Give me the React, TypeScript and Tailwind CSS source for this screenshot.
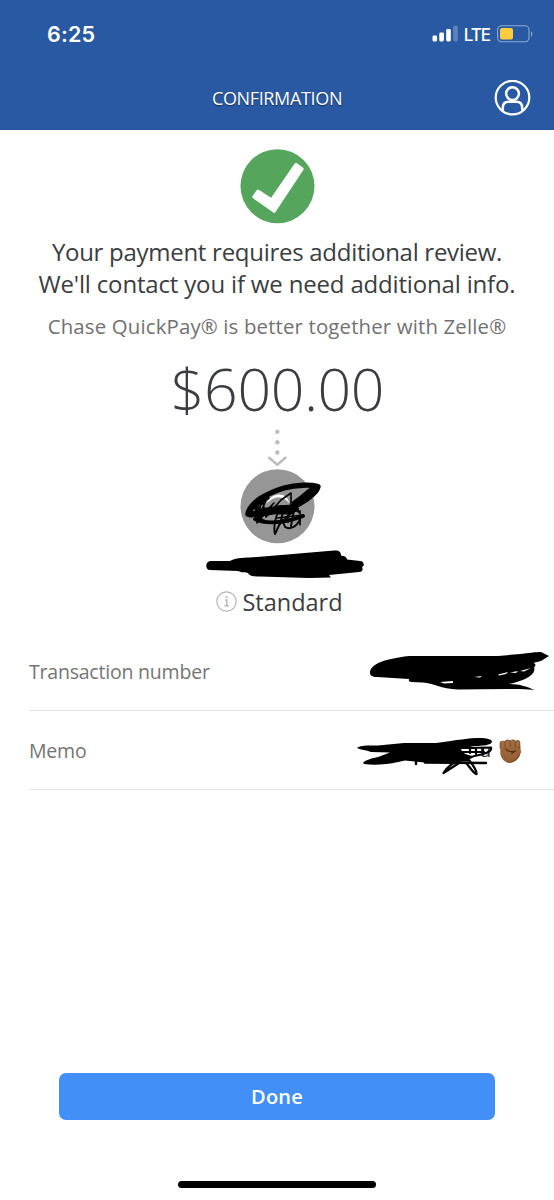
function SignalIcon() {
  return (
    <svg width="27" height="18" viewBox="0 0 27 18" fill="#fff">
      <rect x="0.5" y="10.5" width="4.6" height="6" rx="1.4" />
      <rect x="7.3" y="7.6" width="4.6" height="8.9" rx="1.4" />
      <rect x="14.2" y="4" width="4.6" height="12.5" rx="1.4" />
      <rect x="21.2" y="0.7" width="4.6" height="15.8" rx="1.4" opacity="0.25" />
    </svg>
  )
}

function BatteryIcon() {
  return (
    <svg width="37" height="18" viewBox="0 0 37 18" fill="none">
      <rect x="0.6" y="0.8" width="31.4" height="16" rx="4" stroke="#8ba9d4" strokeWidth="1.1" />
      <rect x="3" y="3" width="13" height="11.6" rx="2" fill="#fdcb3d" />
      <path d="M34 6.2c1.7 0.7 1.7 4.6 0 5.3z" fill="#8ba9d4" />
    </svg>
  )
}

function ProfileIcon() {
  return (
    <svg width="37" height="37" viewBox="0 0 37 37" fill="none" stroke="#fff">
      <circle cx="18.5" cy="17.6" r="16.8" strokeWidth="2.2" />
      <circle cx="18.5" cy="13.6" r="6.4" strokeWidth="2.5" />
      <path d="M8.8 30.6V28C8.8 23.8 11.4 21.8 14.6 21.8H22.4C25.6 21.8 28.2 23.8 28.2 28V30.6" strokeWidth="2.5" />
    </svg>
  )
}

function SuccessIcon() {
  return (
    <svg width="75" height="75" viewBox="0 0 75 75">
      <circle cx="37.5" cy="37.2" r="37" fill="#55a65c" />
      <path d="M14.2 47.9L18.2 42.4L31.6 51.2L56 15.8L61.8 19.9L34 61.9Z" fill="#fff" stroke="#fff" strokeWidth="3.6" strokeLinejoin="round" />
    </svg>
  )
}

function DottedArrow() {
  return (
    <svg width="20" height="42" viewBox="0 0 20 42" fill="#bdbdbd">
      <circle cx="10.3" cy="4.8" r="2.2" />
      <circle cx="10.3" cy="15.2" r="2.2" />
      <circle cx="10.3" cy="25.5" r="2.2" />
      <path d="M2.2 30.8L10.3 37.8L18.4 30.8" fill="none" stroke="#bdbdbd" strokeWidth="2.6" strokeLinecap="round" strokeLinejoin="round" />
    </svg>
  )
}

function Avatar() {
  return (
    <svg className="overflow-visible" width="75" height="75" viewBox="240 469 75 75" fill="none" stroke="#000" strokeLinecap="round" strokeLinejoin="round">
      <circle cx="277.5" cy="506.3" r="37" fill="#969696" stroke="none" />
      <path d="M266 504C269 497 276 493 283 495C287 497 289 500 289 503C285 498 280 496 275 498C271 499 268 502 266 504Z" fill="#fff" stroke="none" />
      <path d="M268 510L276 506L275 514L267 513Z" fill="#fff" stroke="none" />
      <path d="M248 514C250 502 268 493 284 488C297 484.5 311 484.5 318 486.500C317.500 491 309 499 298 504.500C284 511 264 514 248 514" strokeWidth="5.4" />
      <path d="M312 490C306 494 302 499 295 503" strokeWidth="6" />
      <path d="M249 511C256 500 264 495 275 491.5M250 516C258 510 266 509 274 508M254 508C258 503 263 500 268 498" strokeWidth="3.2" />
      <path d="M255 519C266 524.500 286 523 303 516" strokeWidth="3.8" />
      <path d="M248 513L263 496L252 517L269 494L257 520L274 503L257 523L262 498L266 517L281 500L291 493L291 507M256 501L251 514L265 521M275 511H300V525M277 518L303 515M293 508L300 513" strokeWidth="1.6" />
      <path d="M275 534C273 527 276 514 280 508M275 534L282 519L285 527C290 530 296 527 300 520M284 508L280 524L294 510L291 526M288 508V522" strokeWidth="1.9" />
      <path d="M275 506L294 505L299 509L291 514L278 514Z" fill="#000" strokeWidth="1" />
    </svg>
  )
}

function NameMark() {
  return (
    <svg width="160" height="42" viewBox="205 544 160 42">
      <path d="M210 561C205 562 205 570 210 570L238 571C242 573 246 572 248 573C250 577 255 576 260 576.5L292 577.5L309 578L331 577.5L329 575L359 572C363 572 363 569 362 567C365 566 364 561 360 561L347 559.5C347 557 344 556 341 555.5C341 551 338 550 334 550.5L293 554L250 557.5C243 557.5 233 558.5 230 561Z" />
    </svg>
  )
}

function TransactionMark() {
  return (
    <svg width="182" height="46" viewBox="368 648 182 46">
      <path d="M370 673C370 664 384 659 409 656L498 656L520 654C528 653 536 652 541 652L549 656L541 661L533 663C536 663 536 666 534 667C537 675 523 681 509 684C520 684 528 687 534.5 690C521 688.5 514 689 507 689L458 689.5C441 689 433 683 423 682.5L411 682C408 681 409 680 409 679L377 677C372 677 370 675 370 673Z" />
      <path d="M440 682L453 681V683L444 683.5ZM474 677L482 676L480 677.5ZM498 674.5L508 672L506 674L499 675.5ZM510 672.5L518 671L516 673ZM520 671L531 668L524 671.5Z" fill="#fff" />
    </svg>
  )
}

function MemoMark() {
  return (
    <svg width="138" height="40" viewBox="356 736 138 40" fill="none" stroke="#000" strokeLinecap="round" strokeLinejoin="round">
      <text x="479.5" y="757" fontSize="19" fill="#333" stroke="none" className="font-['Open_Sans',sans-serif]">u</text>
      <path d="M357 748C360 745 369 745.5 378 745.5L404 743L436 743C458 740 469 738 480 738C486 738 492 739 492 742C491 745 483 746 474 746L461 749C462 753 467 756 476 756C470 760 461 761 453 763L429 763L405 760.5C391 764 376 766 364 764C361 762 368 759 378 757L390 752.5L371 752C366 750 361 750 357 748Z" fill="#000" stroke="none" />
      <path d="M461 748L491 747.5C493 752 482 755 474 756M463 752H484M470 748V753M476 748V754M483 748V752" strokeWidth="2.2" />
      <path d="M425 762.5L486 763M416 760V764" strokeWidth="2.4" />
      <path d="M443.500 773C447 767 454 761.500 460 760.5L469 760C472 764 477 770 476.500 774C474 774 470 767 466 763M443.500 773L459 763" strokeWidth="2.3" />
    </svg>
  )
}

function FistIcon() {
  return (
    <svg width="23" height="25" viewBox="0 0 23 25">
      <path d="M2 10C0 14 2 20 7 23C12 25.5 19 22 21 16C22 12 22 6 20 5H3C1.5 6 1 8 2 10Z" fill="#966037" />
      <path d="M8 23C15 24 20 19 21.5 12" fill="none" stroke="#79451f" strokeWidth="1" />
      <g fill="#a06c40" stroke="#65391c" strokeWidth="0.6">
        <rect x="1" y="2.2" width="5.4" height="8.4" rx="1.9" />
        <rect x="6" y="1.1" width="5.4" height="8.8" rx="1.9" />
        <rect x="11.2" y="0.9" width="5.2" height="8.4" rx="1.9" />
        <rect x="16.2" y="1.6" width="4.7" height="7.4" rx="1.8" />
      </g>
      <path d="M1.5 12C3 9 8 7.5 17 8.3C22 8.7 21.5 13 20 15C16 19 6 18 2 13Z" fill="#9a653a" />
      <path d="M7 10C8 12 11 13 14 12.4M12.8 14.5C14 13.5 15 13 16.5 11.8" fill="none" stroke="#55301a" strokeWidth="1.3" strokeLinecap="round" />
    </svg>
  )
}

export default function App() {
  return (
    <div className="flex h-[1200px] w-[554px] flex-col overflow-hidden bg-white font-['Open_Sans',sans-serif] text-[#3b3d40]">
      <header className="h-[130px] bg-[#2959a3] text-white">
        <div className="flex h-[68px] items-center justify-between pl-[47px] pr-[20px]">
          <span className="font-['Inter',sans-serif] text-[21.5px] font-semibold tracking-[0.2px]">6:25</span>
          <div className="flex items-center">
            <SignalIcon />
            <span className="ml-[5px] mr-[7px] pt-px font-['Inter',sans-serif] text-[17px] font-medium leading-[18px] tracking-[-1px]">LTE</span>
            <BatteryIcon />
          </div>
        </div>
        <div className="grid h-[60px] grid-cols-[60px_1fr_60px] items-center">
          <span />
          <h1 className="text-center text-[18px] leading-6 tracking-[-0.35px] [text-shadow:0_1px_1px_rgba(0,0,0,0.5)]">CONFIRMATION</h1>
          <button aria-label="Profile">
            <ProfileIcon />
          </button>
        </div>
      </header>

      <main className="flex flex-1 flex-col">
        <section className="flex flex-col items-center pt-[19px]">
          <SuccessIcon />
          <p className="mt-[12px] whitespace-nowrap text-center text-[24px] leading-8">
            <span className="tracking-[-0.28px]">Your payment requires additional review.</span>
            <br />
            <span className="tracking-[-0.17px]">We'll contact you if we need additional info.</span>
          </p>
          <p className="mt-[11px] whitespace-nowrap pt-px text-[20.4px] leading-[29px] tracking-[0.15px] text-[#717171]">
            Chase QuickPay® is better together with Zelle®
          </p>
          <p className="mt-[7px] pl-[1px] text-[59px] font-light leading-[80px] tracking-[-0.4px]">$600.00</p>
          <div className="-mt-px">
            <DottedArrow />
          </div>
          <Avatar />
          <div className="flex pl-[15px]">
            <NameMark />
          </div>
          <div className="flex h-[30px] items-center gap-[5px] pl-[5px]">
            <svg width="21" height="21" viewBox="0 0 21 21" fill="none" stroke="#b5b5b5" className="mt-px">
              <circle cx="10.5" cy="10.5" r="9.7" strokeWidth="1.2" />
              <path d="M9 9H10.8V14.5M8.5 14.8H12.8" strokeWidth="1.4" />
              <circle cx="10.5" cy="6" r="1.1" fill="#b5b5b5" stroke="none" />
            </svg>
            <span className="pt-px text-[23.5px] leading-[30px]">Standard</span>
          </div>
        </section>

        <section className="mt-[15px] text-[19.5px] text-[#757575]">
          <div className="ml-[29px] flex h-[80px] items-center justify-between border-b border-[#e2e2e2] pr-[4px]">
            <span className="pt-[2px] tracking-[-0.21px]">Transaction number</span>
            <TransactionMark />
          </div>
          <div className="ml-[29px] flex h-[79px] items-center border-b border-[#e2e2e2] pr-[32px]">
            <span className="flex-1 pt-[2px] tracking-[-0.2px]">Memo</span>
            <div className="flex items-start gap-[5px] pt-[11px]">
              <MemoMark />
              <div className="pt-[3px]">
                <FistIcon />
              </div>
            </div>
          </div>
        </section>

        <footer className="mt-auto flex flex-col items-center pb-[12px]">
          <button className="h-[47px] w-[436px] rounded-[7px] bg-[#418ff7] pt-px text-[20px] font-semibold tracking-[0.2px] text-white">Done</button>
          <div className="mt-[61px] h-[7px] w-[198px] rounded-full bg-black" />
        </footer>
      </main>
    </div>
  )
}
